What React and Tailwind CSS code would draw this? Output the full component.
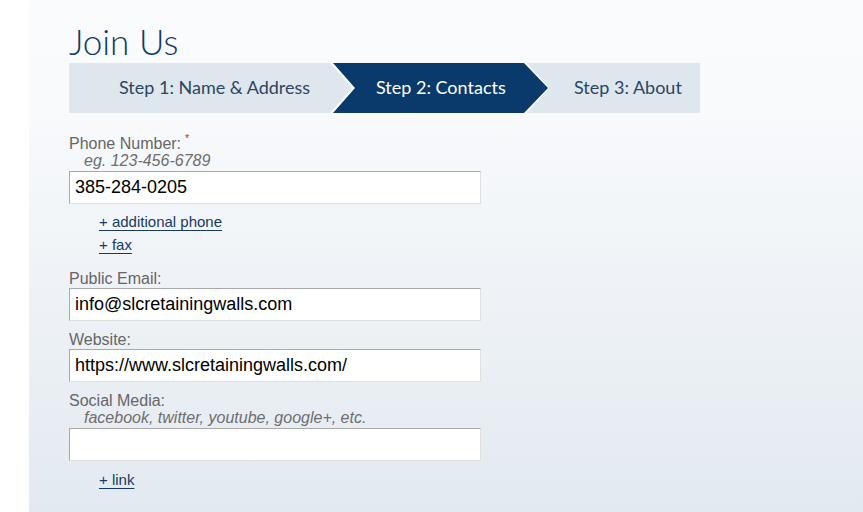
import React from "react";

const inputCls =
  "block w-[412px] h-[33px] mt-[1px] bg-white border border-t-[#a9a9a9] border-l-[#a9a9a9] border-r-[#e0e0e0] border-b-[#e0e0e0] px-[5px] text-[18px] text-black outline-none [font-family:'Liberation_Sans',Arial,sans-serif]";

function Label({ children, star }) {
  return (
    <div className="h-[18px] leading-[20px] text-[16px] text-[#666666]">
      {children}
      {star && <span className="relative -top-[7px] ml-[4px] text-[11px] text-[#e0262b]">*</span>}
    </div>
  );
}

function Hint({ children }) {
  return (
    <div className="h-[18px] leading-[18px] text-[16px] italic text-[#6e6e6e] pl-[15px]">{children}</div>
  );
}

function LinkLine({ children }) {
  return (
    <div className="h-[18px] leading-[18px] pl-[30px]">
      <a href="#" className="text-[15px] text-[#173a63] underline underline-offset-[3px]">
        {children}
      </a>
    </div>
  );
}

export default function App() {
  return (
    <div className="w-[863px] h-[512px] bg-white flex overflow-hidden [font-family:'Liberation_Sans',Arial,sans-serif]">
      <div className="w-[29px] shrink-0 bg-white" />
      <div className="flex-1 bg-[linear-gradient(180deg,#fafbfd_0%,#f8fafc_22%,#e2e9f0_100%)] pl-[40px] pt-[20px]">
        <h1 className="h-[42px] leading-[42px] text-[35px] text-[#0d3a6b] [font-family:Lato,'Open_Sans',sans-serif] font-light">
          Join Us
        </h1>
        <div className="relative mt-[1px] flex h-[50px] w-[631px] bg-white text-[18px] [font-family:Lato,'Open_Sans',sans-serif]">
          <div className="absolute left-0 top-0 h-full w-[283px] bg-[#dee7ee] [clip-path:polygon(0_0,261px_0,100%_50%,261px_100%,0_100%)] flex items-center pl-[50px] pb-[1px] text-[#2d4563]">
            Step 1: Name &amp; Address
          </div>
          <div className="absolute left-[264px] top-0 h-full w-[215px] bg-[#0a3a6b] [clip-path:polygon(0_0,191px_0,100%_50%,191px_100%,0_100%,22px_50%)] flex items-center pl-[43px] pb-[1px] text-white">
            Step 2: Contacts
          </div>
          <div className="absolute left-[458px] top-0 h-full w-[173px] bg-[#dee7ee] [clip-path:polygon(0_0,100%_0,100%_100%,0_100%,22px_50%)] flex items-center pl-[47px] pb-[1px] text-[#2d4563]">
            Step 3: About
          </div>
        </div>

        <div className="pt-[21px]">
          <Label star>Phone Number:</Label>
          <Hint>eg. 123-456-6789</Hint>
          <input className={inputCls} defaultValue="385-284-0205" />
          <div className="mt-[9px]">
            <LinkLine>+ additional phone</LinkLine>
          </div>
          <div className="mt-[5px]">
            <LinkLine>+ fax</LinkLine>
          </div>

          <div className="mt-[15px]">
            <Label>Public Email:</Label>
            <input className={inputCls} defaultValue="info@slcretainingwalls.com" />
          </div>

          <div className="mt-[9px]">
            <Label>Website:</Label>
            <input className={inputCls} defaultValue="https://www.slcretainingwalls.com/" />
          </div>

          <div className="mt-[9px]">
            <Label>Social Media:</Label>
            <Hint>facebook, twitter, youtube, google+, etc.</Hint>
            <input className={inputCls} defaultValue="" />
          </div>

          <div className="mt-[10px]">
            <LinkLine>+ link</LinkLine>
          </div>
        </div>
      </div>
    </div>
  );
}
